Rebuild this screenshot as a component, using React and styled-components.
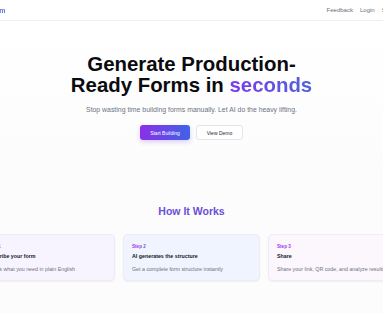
import styled, {createGlobalStyle} from 'styled-components';

const GlobalStyle = createGlobalStyle`
  html, body {
    margin: 0;
    padding: 0;
    background: #ffffff;
    overflow: hidden;
  }
  body {
    font-family: "Liberation Sans", Arial, sans-serif;
  }
`;

const steps = [
  {label: 'Step 1', title: 'Describe your form', text: 'Tell us what you need in plain English', tone: 'purple'},
  {label: 'Step 2', title: 'AI generates the structure', text: 'Get a complete form structure instantly', tone: 'blue'},
  {label: 'Step 3', title: 'Share', text: 'Share your link, QR code, and analyze results', tone: 'pink'},
];

const tones = {
  purple: '#f8f4ff',
  blue: '#eff4fe',
  pink: '#fcf6fd',
};

const App = () => {
  return (
    <Page>
      <GlobalStyle />
      <Header>
        <HeaderInner>
          <Logo>AI Form</Logo>
          <Nav>
            <NavLink>Feedback</NavLink>
            <NavLink>Login</NavLink>
            <NavLink>Sign up</NavLink>
          </Nav>
        </HeaderInner>
      </Header>

      <Hero>
        <Title>
          Generate Production-
          <br />
          Ready Forms in <Accent>seconds</Accent>
        </Title>
        <Subtitle>Stop wasting time building forms manually. Let AI do the heavy lifting.</Subtitle>
        <Actions>
          <PrimaryButton>Start Building</PrimaryButton>
          <SecondaryButton>View Demo</SecondaryButton>
        </Actions>
      </Hero>

      <Steps>
        <SectionTitle>How It Works</SectionTitle>
        <CardRow>
          {steps.map((s) => (
            <Card key={s.label} $tone={s.tone}>
              <StepLabel>{s.label}</StepLabel>
              <CardTitle>{s.title}</CardTitle>
              <CardText>{s.text}</CardText>
            </Card>
          ))}
        </CardRow>
      </Steps>
    </Page>
  );
};

export default App;

const Page = styled.div`
  width: 383px;
  height: 328px;
  display: flex;
  flex-direction: column;
  background: #ffffff;
`;

const Header = styled.header`
  height: 20px;
  display: flex;
  justify-content: center;
  border-bottom: 1px solid #f0f0f2;
  flex-shrink: 0;
`;

const HeaderInner = styled.div`
  width: 427px;
  flex-shrink: 0;
  display: flex;
  align-items: center;
  justify-content: space-between;
  padding: 0 0 0 1px;
  box-sizing: border-box;
`;

const Logo = styled.span`
  font-size: 7px;
  font-weight: 700;
  background: linear-gradient(90deg, #7c3aed, #4f6fe0);
  -webkit-background-clip: text;
  background-clip: text;
  color: transparent;
`;

const Nav = styled.nav`
  display: flex;
  align-items: center;
  gap: 7px;
  margin-right: 3px;
`;

const NavLink = styled.span`
  font-size: 6px;
  color: #6b7280;
`;

const Hero = styled.section`
  display: flex;
  flex-direction: column;
  align-items: center;
  padding-top: 33px;
  height: 150px;
  box-sizing: border-box;
  flex-shrink: 0;
  background: linear-gradient(180deg, #ffffff 0%, #fcfcfd 100%);
`;

const Title = styled.h1`
  margin: 0;
  font-size: 20.4px;
  line-height: 21px;
  font-weight: 700;
  color: #0b0b0f;
  text-align: center;
`;

const Accent = styled.span`
  background: linear-gradient(90deg, #7c3aed 0%, #4f63d8 100%);
  -webkit-background-clip: text;
  background-clip: text;
  color: transparent;
`;

const Subtitle = styled.p`
  margin: 9px 0 0;
  font-size: 6.9px;
  line-height: 9px;
  color: #6b7280;
`;

const Actions = styled.div`
  display: flex;
  gap: 6px;
  margin-top: 11px;
`;

const PrimaryButton = styled.button`
  width: 50px;
  height: 15px;
  border: none;
  border-radius: 3px;
  padding: 0;
  font-family: inherit;
  font-size: 5px;
  color: #ffffff;
  background: linear-gradient(90deg, #8b2fe6 0%, #3f63e8 100%);
  box-shadow: 0 2px 5px rgba(124, 58, 237, 0.25);
`;

const SecondaryButton = styled.button`
  width: 47px;
  height: 15px;
  border: 1px solid #e3e4e8;
  border-radius: 3px;
  padding: 0;
  font-family: inherit;
  font-size: 5px;
  color: #1f2937;
  background: #ffffff;
`;

const Steps = styled.section`
  display: flex;
  flex-direction: column;
  align-items: center;
  height: 142px;
  flex-shrink: 0;
  padding-top: 34px;
  box-sizing: border-box;
  background: #fcfcfd;
`;

const SectionTitle = styled.h2`
  margin: 0;
  font-size: 10.5px;
  line-height: 12px;
  font-weight: 700;
  color: #6b4fd6;
`;

const CardRow = styled.div`
  width: 427px;
  flex-shrink: 0;
  display: grid;
  grid-template-columns: repeat(3, 1fr);
  gap: 8px;
  margin-top: 17px;
  align-self: center;
`;

const Card = styled.div`
  height: 47px;
  box-sizing: border-box;
  padding: 9px 8px;
  border-radius: 5px;
  background: ${({$tone}) => tones[$tone]};
  border: 1px solid rgba(230, 230, 240, 0.6);
  box-shadow: 0 1px 2px rgba(16, 24, 40, 0.06);
  white-space: nowrap;
  overflow: hidden;
`;

const StepLabel = styled.div`
  font-size: 4.6px;
  line-height: 6px;
  font-weight: 700;
  color: #9b3ee8;
`;

const CardTitle = styled.div`
  margin-top: 2px;
  font-size: 5.3px;
  line-height: 8px;
  font-weight: 700;
  color: #111827;
`;

const CardText = styled.div`
  margin-top: 6px;
  font-size: 5.3px;
  line-height: 7px;
  color: #6b7280;
`;
